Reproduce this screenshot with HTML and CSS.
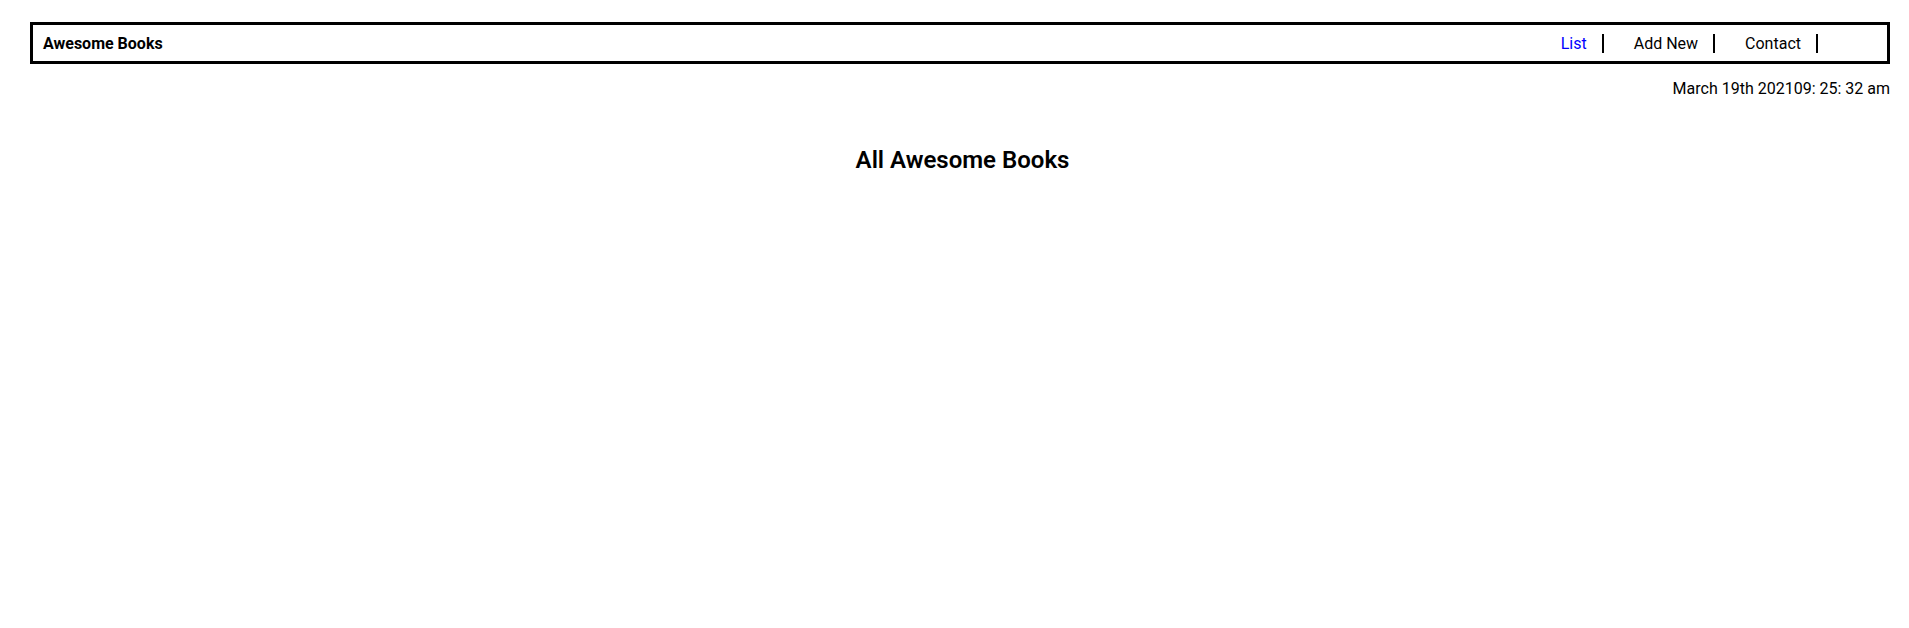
FILE: index.html
```html
<!DOCTYPE html>
<html lang="en">
<head>
<meta charset="utf-8">
<title>Awesome Books</title>
<link rel="stylesheet" href="styles.css">
</head>
<body>
<header class="topbar">
  <div class="brand">Awesome Books</div>
  <nav class="nav">
    <a class="nav-link active" href="#">List</a>
    <a class="nav-link" href="#">Add New</a>
    <a class="nav-link" href="#">Contact</a>
  </nav>
</header>
<div class="date">March 19th 202109: 25: 32 am</div>
<main class="main">
  <h2 class="title">All Awesome Books</h2>
</main>
</body>
</html>
```
FILE: styles.css
```css
* { box-sizing: border-box; }
body {
  margin: 0;
  font-family: Roboto, "Liberation Sans", sans-serif;
  font-size: 16px;
  color: #000;
  background: #fff;
}
.topbar {
  margin: 22px 19px 0 30px;
  height: 42px;
  border: 3px solid #000;
  display: flex;
  align-items: center;
  justify-content: space-between;
  padding: 0 69px 0 10px;
}
.brand {
  font-weight: 700;
  font-size: 16px;
}
.nav {
  display: flex;
  gap: 15px;
}
.nav-link {
  color: #000;
  text-decoration: none;
  padding: 0 15px 0 15px;
  border-right: 2px solid #000;
  line-height: 19px;
}
.nav-link.active { color: #0000ff; }
.date {
  text-align: right;
  padding: 15px 19px 0 0;
  line-height: 19px;
}
.main {
  padding-left: 16px;
}
.title {
  text-align: center;
  font-size: 24px;
  font-weight: 600;
  margin: 48px 0 0;
}
```
